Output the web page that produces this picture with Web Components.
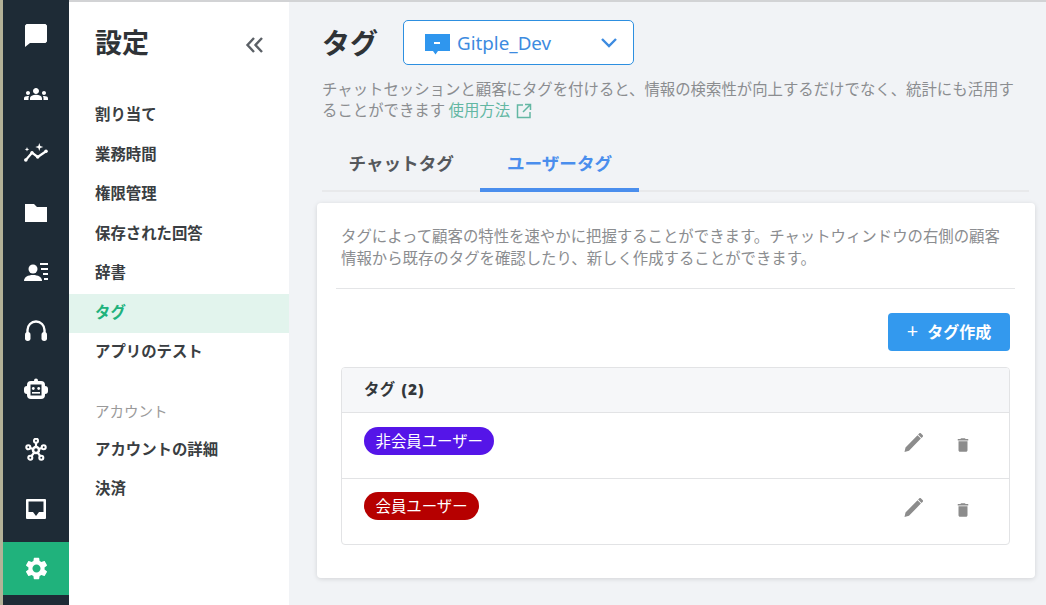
<!DOCTYPE html>
<html lang="ja"><head><meta charset="utf-8"><title>タグ</title>
<style>
html,body{margin:0;padding:0;height:605px;overflow:hidden;background:#f1f3f6;font-family:"Noto Sans","Noto Sans CJK JP",sans-serif;}
</style></head><body>
<app-shell>
  <icon-rail slot="rail">
    <rail-item><svg viewBox="0 0 24 24" fill="#fff"><path d="M1 2.500 2.500 1h19L23 2.500v16L21.500 20H6l-5 4z"/></svg></rail-item>
    <rail-item><svg viewBox="0 0 24 24" fill="#fff"><path d="M12 12.750c1.630 0 3.070.39 4.240.9 1.080.48 1.760 1.560 1.760 2.730V18H6v-1.610c0-1.180.68-2.260 1.760-2.730 1.170-.52 2.610-.91 4.240-.91zM4 13c1.100 0 2-.9 2-2s-.9-2-2-2-2 .9-2 2 .9 2 2 2zm1.130 1.100c-.37-.06-.74-.1-1.130-.1-.99 0-1.930.21-2.780.58C.48 14.900 0 15.620 0 16.430V18h4.500v-1.610c0-.83.23-1.610.63-2.290zM20 13c1.100 0 2-.9 2-2s-.9-2-2-2-2 .9-2 2 .9 2 2 2zm4 3.430c0-.81-.48-1.530-1.220-1.850-.85-.37-1.790-.58-2.780-.58-.39 0-.76.04-1.130.1.4.68.63 1.460.63 2.290V18H24v-1.570zM12 6c1.660 0 3 1.340 3 3s-1.340 3-3 3-3-1.340-3-3 1.340-3 3-3z"/></svg></rail-item>
    <rail-item><svg viewBox="0 0 24 24" fill="#fff"><path d="M15.300 2l1 3 3 1-3 1-1 3-1-3-3-1 3-1zM3 6l.6 1.700 1.700.6-1.700.6L3 10.600l-.6-1.700-1.700-.6 1.700-.6z"/><path d="M1.800 19 8 11.700 13.700 16 22.500 10" stroke="#fff" stroke-width="2.200" fill="none" stroke-linejoin="round"/><circle cx="1.800" cy="19" r="1.800"/><circle cx="8" cy="11.700" r="1.700"/><circle cx="13.700" cy="16" r="1.700"/><circle cx="22" cy="10.300" r="1.800"/></svg></rail-item>
    <rail-item><svg viewBox="0 0 24 24" fill="#fff"><path d="M1 3h9l3 3h10v15H1z"/></svg></rail-item>
    <rail-item><svg viewBox="0 0 24 24" fill="#fff"><circle cx="9" cy="9" r="4.500"/><path d="M0 21c0-4 4-6 9-6s9 2 9 6z"/><path d="M16 3h8v2h-8zM17 8h7v2h-7zM19 13h5v2h-5zM20 18h4v2h-4z"/></svg></rail-item>
    <rail-item><svg viewBox="0 0 24 24"><path d="M3.500 15V11a8.500 8.500 0 0 1 17 0v4" fill="none" stroke="#fff" stroke-width="2.400"/><rect x="1" y="13" width="5.500" height="9" rx="2.700" fill="#fff"/><rect x="17.500" y="13" width="5.500" height="9" rx="2.700" fill="#fff"/></svg></rail-item>
    <rail-item><svg viewBox="0 0 24 24" fill="#fff"><circle cx="12" cy="2.500" r="2"/><rect x="0" y="8" width="6" height="8" rx="3"/><rect x="18" y="8" width="6" height="8" rx="3"/><path fill-rule="evenodd" d="M7 3h10a4 4 0 0 1 4 4v10a4 4 0 0 1-4 4H7a4 4 0 0 1-4-4V7a4 4 0 0 1 4-4zm-.5 3.500v11h11v-11z"/><circle cx="9.300" cy="10.500" r="1.400"/><circle cx="14.700" cy="10.500" r="1.400"/><rect x="8" y="14" width="8" height="1.600"/></svg></rail-item>
    <rail-item><svg viewBox="0 0 24 24" fill="none" stroke="#fff" stroke-width="2.100"><circle cx="12" cy="12" r="3" stroke-width="2.500"/><circle cx="12" cy="2.700" r="2"/><circle cx="4.300" cy="9.300" r="2"/><circle cx="19.700" cy="9.300" r="2"/><circle cx="6.300" cy="19.700" r="2"/><circle cx="17.300" cy="19.700" r="2"/><path d="M12 4.700V9M6.200 10l3 1M17.800 10l-3 1M7.500 18l2.800-3.500M16.200 18l-2.600-3.500" stroke-width="2.200"/></svg></rail-item>
    <rail-item><svg viewBox="0 0 24 24" fill="#fff"><path fill-rule="evenodd" d="M3 2h18a1 1 0 0 1 1 1v18a1 1 0 0 1-1 1H3a1 1 0 0 1-1-1V3a1 1 0 0 1 1-1zm1.500 2.500V15h4.500l3 4 3-4h4.500V4.500z"/></svg></rail-item>
    <rail-item active><svg style="width:27px;height:27px" viewBox="0 0 24 24" fill="#fff"><path d="M19.140 12.940c.04-.3.06-.61.06-.94 0-.32-.02-.64-.07-.94l2.030-1.580c.18-.14.23-.41.12-.61l-1.920-3.320c-.12-.22-.37-.29-.59-.22l-2.390.96c-.5-.38-1.030-.7-1.620-.94l-.36-2.540c-.04-.24-.24-.41-.48-.41h-3.840c-.24 0-.43.17-.47.41l-.36 2.540c-.59.24-1.130.57-1.620.94l-2.390-.96c-.22-.08-.47 0-.59.22L2.740 8.870c-.12.21-.08.47.12.61l2.030 1.580c-.05.3-.09.63-.09.94s.02.64.07.94l-2.030 1.580c-.18.14-.23.41-.12.61l1.920 3.320c.12.22.37.29.59.22l2.390-.96c.5.38 1.030.7 1.620.94l.36 2.540c.05.24.24.41.48.41h3.840c.24 0 .44-.17.47-.41l.36-2.540c.59-.24 1.130-.56 1.620-.94l2.390.96c.22.08.47 0 .59-.22l1.920-3.320c.12-.22.07-.47-.12-.61l-2.010-1.580zM12 15.600c-1.980 0-3.600-1.620-3.600-3.600s1.620-3.600 3.600-3.600 3.600 1.620 3.600 3.600-1.620 3.600-3.600 3.600z"/></svg></rail-item>
  </icon-rail>
  <settings-nav slot="nav">
    <nav-item>割り当て</nav-item>
    <nav-item>業務時間</nav-item>
    <nav-item>権限管理</nav-item>
    <nav-item>保存された回答</nav-item>
    <nav-item>辞書</nav-item>
    <nav-item active>タグ</nav-item>
    <nav-item>アプリのテスト</nav-item>
    <nav-head>アカウント</nav-head>
    <nav-item>アカウントの詳細</nav-item>
    <nav-item>決済</nav-item>
  </settings-nav>
  <tag-page slot="main">
    <tag-card>
      <tag-table></tag-table>
    </tag-card>
  </tag-page>
</app-shell>
<script>
function def(name, css, html, init){
  customElements.define(name, class extends HTMLElement{
    constructor(){super();const r=this.attachShadow({mode:"open"});r.innerHTML="<style>"+css+"</style>"+html;}
    connectedCallback(){if(init)init(this);}
  });
}
const PENCIL='<svg viewBox="0 0 24 24" width="24" height="24" fill="#8c8c8c"><path d="M3.500 21l1-4.500L16.500 4.200l3.400 3.400L8 19.800zM17.100 3.600l1.300-1.300c.4-.4 1-.4 1.400 0l2 2c.4.4.4 1 0 1.400L20.500 7z"/></svg>';
const TRASH='<svg viewBox="0 0 24 24" width="18" height="18" fill="#8c8c8c"><path d="M6 19c0 1.100.9 2 2 2h8c1.100 0 2-.9 2-2V7H6v12zM19 4h-3.500l-1-1h-5l-1 1H5v2h14V4z"/></svg>';

def("app-shell",`:host{display:flex;height:605px;overflow:hidden;box-sizing:border-box;border-left:3px solid #b3b298;position:relative}
.shade{position:absolute;left:66px;right:0;top:0;height:2px;background:#d2d3d5}
.main{flex:1;min-width:0}`,
`<slot name="rail"></slot><slot name="nav"></slot><div class="main"><slot name="main"></slot></div><div class="shade"></div>`);

def("icon-rail",`:host{display:flex;flex-direction:column;width:66px;height:605px;background:#1e2b36;padding-top:5px;box-sizing:border-box;flex:none}`,`<slot></slot>`);

def("rail-item",`:host{display:flex;align-items:center;justify-content:center;height:59.300px;flex:none}
:host([active]){background:#20b27c;height:53px;margin-top:3px}
::slotted(svg){width:24px;height:24px;display:block}`,`<slot></slot>`);

def("settings-nav",`:host{display:block;width:220px;height:605px;background:#fff;flex:none;box-sizing:border-box}
.top{display:flex;align-items:center;justify-content:space-between;height:52px;padding:16px 24px 0 26px}
.top svg{margin-top:6px}
h1{margin:0;font:700 27px/36px "Noto Sans CJK JP",sans-serif;color:#2f3337;white-space:nowrap}
.list{padding-top:28px}`,
`<div class="top"><h1>設定</h1><svg width="20" height="18" viewBox="0 0 20 18" fill="none" stroke="#5b6066" stroke-width="2.400"><path d="M9 2 2.500 9 9 16M17 2l-6.500 7 6.500 7"/></svg></div><div class="list"><slot></slot></div>`);

def("nav-item",`:host{display:flex;align-items:center;height:39.500px;box-sizing:border-box;padding:0 0 5px 26px;font:700 15.400px/20px "Noto Sans CJK JP",sans-serif;color:#3a3e42}
:host([active]){background:#e2f4ed;color:#20b27c}`,`<slot></slot>`);

def("nav-head",`:host{display:flex;align-items:center;height:37px;margin-top:21px;padding:0 0 3px 26px;box-sizing:border-box;font:400 14.500px/20px "Noto Sans CJK JP",sans-serif;color:#9a9a9a}`,`<slot></slot>`);

def("tag-page",`:host{display:block;padding:20px 11px 0 28px;font-family:"Noto Sans","Noto Sans CJK JP",sans-serif}
.head{display:flex;align-items:center;gap:26px;margin-left:5px}
h2{margin:0;font:700 28px/45px "Noto Sans CJK JP",sans-serif;color:#2f3337;width:55px;white-space:nowrap}
.select{display:flex;align-items:center;width:231px;height:45px;box-sizing:border-box;border:1px solid #2d8fe0;border-radius:5px;background:#fff;padding:0 15px 0 20px;color:#3d8be0;font-size:18.800px}
.select span{flex:1;margin-left:7px}
.desc{margin:13px 0 0 5px;font:400 15.400px/21px "Noto Sans CJK JP",sans-serif;color:#8b8d90;height:42px;white-space:nowrap}
.desc a{color:#63b7a3;text-decoration:none}
.desc svg{vertical-align:-3px;margin-left:2px}
.tabs{display:flex;margin:24px 6px 0 5px;border-bottom:2px solid #e8e9eb;height:46px;box-sizing:content-box}
.tab{font:700 17.600px/26px "Noto Sans CJK JP",sans-serif;color:#55585c;padding:6px 26.500px 0;height:48px;box-sizing:border-box}
.tab.on{color:#4a8eed;border-bottom:4px solid #4a8eed}`,
`<div class="head"><h2>タグ</h2><div class="select"><svg width="26" height="24" viewBox="0 0 26 24" style="flex:none"><path d="M1 3h25v17H14l-2.500 3.500L9 20H1z" fill="#2f96ee"/><rect x="10" y="11" width="6" height="2" fill="#fff"/></svg><span>Gitple_Dev</span><svg width="18" height="12" viewBox="0 0 18 12" fill="none" stroke="#3d8be0" stroke-width="2.400"><path d="M2 2l7 7 7-7"/></svg></div></div>
<div class="desc"><div>チャットセッションと顧客にタグを付けると、情報の検索性が向上するだけでなく、統計にも活用す</div><div>ることができます <a href="#">使用方法 <svg width="16" height="16" viewBox="0 0 16 16" fill="none" stroke="#63b7a3" stroke-width="1.500"><path d="M7 2H1.500v12.500H14V9M9 1.500h5.500V7M14 2 7 9"/></svg></a></div></div>
<div class="tabs"><div class="tab">チャットタグ</div><div class="tab on">ユーザータグ</div></div>
<slot></slot>`);

def("tag-card",`:host{display:block;margin-top:11px;height:375px;box-sizing:border-box;background:#fff;border-radius:4px;box-shadow:0 1px 5px rgba(0,0,0,.13);padding:22px 19px 0}
.desc{margin:0 5px;font:400 15.400px/21.500px "Noto Sans CJK JP",sans-serif;color:#8b8d90;height:63px}
hr{border:0;border-top:1px solid #e4e5e7;margin:0 1px 24px 0}
.bar{display:flex;justify-content:flex-end;margin-right:6px}
button{display:flex;align-items:center;justify-content:center;gap:9px;width:122px;height:38px;border:0;border-radius:4px;background:#3399ee;color:#fff;font:700 16px/20px "Noto Sans CJK JP",sans-serif;padding:0 0 3px}
button span{font-weight:400;font-size:20px;line-height:20px;font-family:"Noto Sans",sans-serif}`,
`<div class="desc">タグによって顧客の特性を速やかに把握することができます。チャットウィンドウの右側の顧客情報から既存のタグを確認したり、新しく作成することができます。</div><hr><div class="bar"><button><span>+</span>タグ作成</button></div><slot></slot>`);

def("tag-table",`:host{display:block;margin:16px 6px 0 5px;border:1px solid #e2e3e5;border-radius:4px;overflow:hidden}
.h{height:44px;background:#f6f7f9;border-bottom:1px solid #e2e3e5;display:flex;align-items:center;padding-left:22px;font:700 15.400px/20px "Noto Sans","Noto Sans CJK JP",sans-serif;color:#33373b;letter-spacing:.3px}
.h b{font-family:"Noto Sans",sans-serif;margin-left:6px;letter-spacing:1px}`,
`<div class="h">タグ<b>(2)</b></div><tag-row color="#5515e8" label="非会員ユーザー"></tag-row><tag-row color="#b60000" label="会員ユーザー" last></tag-row>`);

def("tag-row",`:host{display:flex;align-items:flex-start;border-bottom:1px solid #e2e3e5;padding:14px 0 0 22px;box-sizing:border-box;height:66px}
:host([last]){border-bottom:0;height:65px;padding-top:13px}
.p{height:28px;border-radius:14px;padding:0 11.500px;color:#fff;font:400 15.400px/26px "Noto Sans CJK JP",sans-serif;white-space:nowrap}
.a{margin-left:auto;display:flex;align-items:flex-start;gap:29px;padding:4px 37px 0 0}
.a svg{display:block}
.a svg+svg{margin-top:5px}`,
`<div class="p"></div><div class="a">${PENCIL}${TRASH}</div>`,
el=>{const p=el.shadowRoot.querySelector(".p");p.textContent=el.getAttribute("label");p.style.background=el.getAttribute("color");});
</script>
</body></html>
